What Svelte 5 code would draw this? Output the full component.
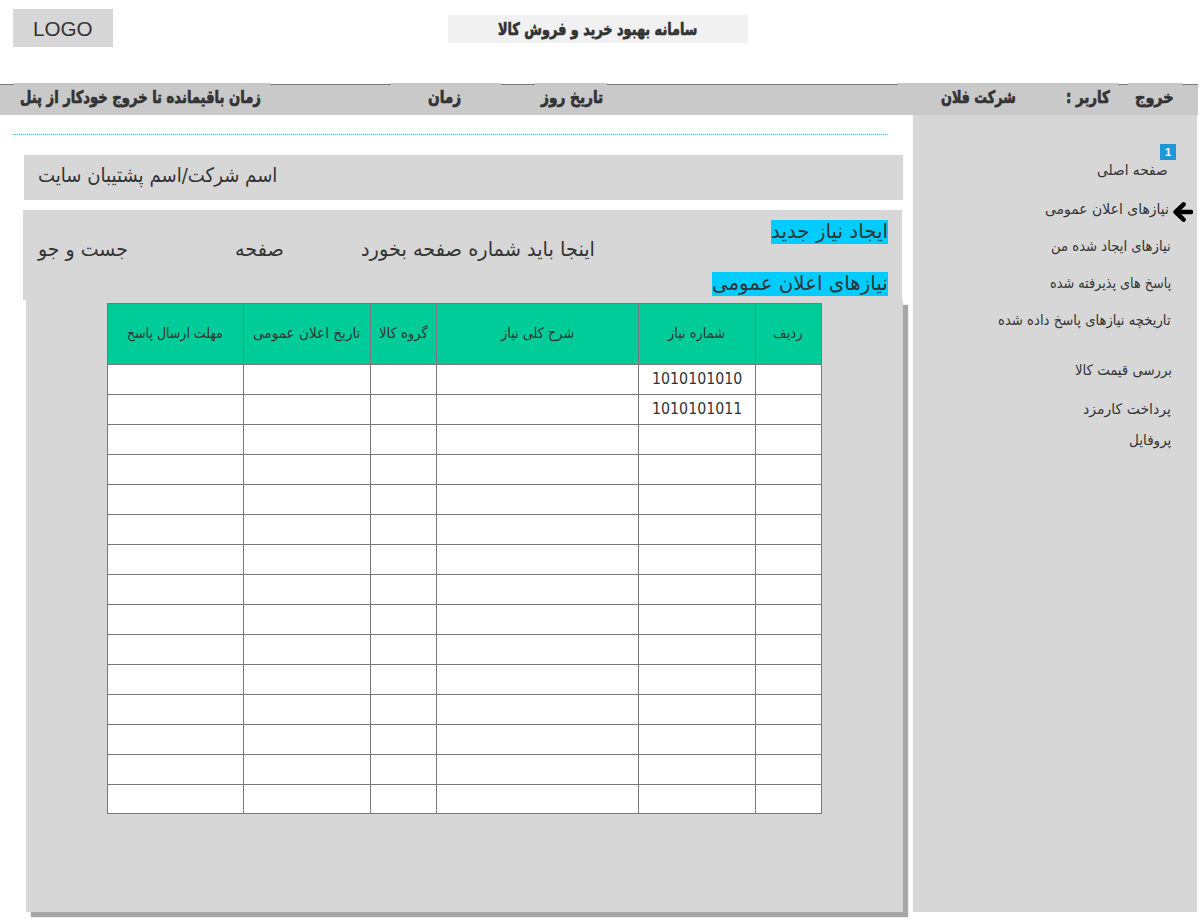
<script>
  const session = [
    { text: 'زمان باقیمانده تا خروج خودکار از پنل', w: 241, box: 256, before: 14, pad: 6 },
    { text: 'زمان', w: 33, box: 110, before: 121, pad: 37 },
    { text: 'تاریخ روز', w: 62, box: 72, before: 34, pad: 6 }
  ];
  const menu = [
    { text: 'صفحه اصلی', w: 71, h: 39, right: 29 },
    { text: 'نیازهای اعلان عمومی', w: 124, h: 37, right: 28, current: true },
    { text: 'نیازهای ایجاد شده من', w: 120, h: 37, right: 26 },
    { text: 'پاسخ های پذیرفته شده', w: 121, h: 37, right: 26 },
    { text: 'تاریخچه نیازهای پاسخ داده شده', w: 173, h: 50, right: 26 },
    { text: 'بررسی قیمت کالا', w: 97, h: 39, right: 25 },
    { text: 'پرداخت کارمزد', w: 88, h: 31, right: 26 },
    { text: 'پروفایل', w: 42, h: 30, right: 26 }
  ];
  const columns = [
    { text: 'مهلت ارسال پاسخ', w: 96 },
    { text: 'تاریخ اعلان عمومی', w: 107 },
    { text: 'گروه کالا', w: 49 },
    { text: 'شرح کلی نیاز', w: 73 },
    { text: 'شماره نیاز', w: 57 },
    { text: 'ردیف', w: 30 }
  ];
  const numbers = ['1010101010', '1010101011'];
  const rows = Array.from({ length: 15 }, (_, r) => columns.map((_, c) => (c === 4 ? numbers[r] : undefined)));

  // Condenses or widens a label so that it fills its allotted width.
  function fit(node, width) {
    node.style.transform = `scaleX(${width / node.offsetWidth})`;
  }
</script>

{#snippet label(text, w)}
  <span class="label" style="width:{w}px"><span class="ink" dir="rtl" use:fit={w}>{text}</span></span>
{/snippet}

<div class="page">
  <header>
    <div class="logo">{@render label('LOGO', 60)}</div>
    <h1>{@render label('سامانه بهبود خرید و فروش کالا', 199)}</h1>
  </header>

  <nav class="bar">
    {#each session as s}
      <div class="tag" style="width:{s.box}px;margin-left:{s.before}px;padding-left:{s.pad}px">{@render label(s.text, s.w)}</div>
    {/each}
    <div class="tag user">
      {@render label('شرکت فلان', 75)}
      {@render label('کاربر :', 44)}
    </div>
    <div class="tag exit">{@render label('خروج', 39)}</div>
  </nav>

  <div class="body">
    <main>
      <div class="rule"></div>
      <section class="company">{@render label('اسم شرکت/اسم پشتیبان سایت', 239)}</section>
      <section class="tools">
        <div class="search">{@render label('جست و جو', 90)}</div>
        <div class="pageword">{@render label('صفحه', 49)}</div>
        <div class="pagenum">{@render label('اینجا باید شماره صفحه بخورد', 234)}</div>
        <div class="links">
          <div class="mark">{@render label('ایجاد نیاز جدید', 117)}</div>
          <div class="mark">{@render label('نیازهای اعلان عمومی', 176)}</div>
        </div>
      </section>
      <section class="panel">
        <div class="table">
          {#each columns as c}
            <div class="cell head">{@render label(c.text, c.w)}</div>
          {/each}
          {#each rows as row}
            {#each row as value}
              <div class="cell">{#if value}{@render label(value, 90)}{/if}</div>
            {/each}
          {/each}
        </div>
      </section>
    </main>

    <aside>
      <div class="badge">1</div>
      {#each menu as m}
        <div class="item" style="height:{m.h}px;padding-right:{m.right}px">
          {@render label(m.text, m.w)}
          {#if m.current}
            <svg class="arrow" width="20" height="20" viewBox="0 0 20 20">
              <path d="M10.6 2.4 2.6 10l8 7.6M3 10h15" fill="none" stroke="#000" stroke-width="4.5" stroke-linecap="round" stroke-linejoin="round" />
            </svg>
          {/if}
        </div>
      {/each}
    </aside>
  </div>
</div>

<style>
  :global(body) { margin: 0; background: #fff; }
  .page { width: 1200px; height: 920px; overflow: hidden; color: #333; font-family: "DejaVu Sans", sans-serif; }
  .label { display: block; flex: none; white-space: nowrap; }
  .ink { display: inline-block; transform-origin: left center; line-height: 24px; vertical-align: top; }

  header { display: flex; height: 84px; align-items: flex-start; }
  .logo { box-sizing: border-box; width: 100px; height: 38px; margin: 9px 0 0 13px; padding: 1px 1px 0 0; background: #d7d7d7; display: flex; align-items: center; justify-content: center; font: 21px "Liberation Sans", Arial, sans-serif; }
  h1 { box-sizing: border-box; margin: 15px 0 0 335px; width: 300px; height: 28px; padding-right: 1px; background: #f1f1f1; display: flex; justify-content: center; align-items: center; font-size: 17px; font-weight: 700; -webkit-text-stroke: 0.7px #333; }

  .bar { display: flex; box-sizing: border-box; width: 1198px; height: 31px; border-top: 1px solid #797979; background: #c9c9c9; font-size: 17px; font-weight: 700; -webkit-text-stroke: 0.7px #333; }
  .tag { box-sizing: border-box; flex: none; margin-top: -2px; height: 32px; display: flex; align-items: center; padding-bottom: 4px; background: #c9c9c9; }
  .user { width: 220px; margin-left: 291px; padding-left: 43px; gap: 50px; }
  .exit { width: 54px; margin-left: 10px; padding-left: 7px; }

  .body { display: flex; }
  main { width: 913px; }
  .rule { width: 875px; height: 1px; margin: 19px 0 20px 13px; background: repeating-linear-gradient(90deg, #40c8d6 0 1px, #b8f6fa 1px 2px); }
  .company { box-sizing: border-box; width: 879px; height: 45px; margin-left: 24px; padding: 8px 14px; background: #d7d7d7; font-size: 20px; }
  .tools { box-sizing: border-box; position: relative; z-index: 1; display: flex; width: 879px; height: 90px; margin: 10px 0 0 23px; padding: 10px 14px 0 15px; background: #d7d7d7; font-size: 20px; }
  .search, .pageword, .pagenum { padding-top: 17px; }
  .pageword { margin-left: 107px; }
  .pagenum { margin-left: 77px; }
  .links { margin-left: auto; display: flex; flex-direction: column; align-items: flex-end; gap: 28px; }
  .mark { height: 24px; background: #00ccff; }
  .mark .ink { line-height: 22px; }
  .panel { box-sizing: border-box; width: 877px; height: 612px; margin-left: 26px; padding: 3px 0 0 81px; background: #d7d7d7; box-shadow: 5px 5px 1px rgba(0, 0, 0, 0.35); }
  .table { display: grid; box-sizing: border-box; width: 715px; grid-template-columns: 135px 126px 65px 201px 116px 65px; grid-template-rows: 60px repeat(14, 29px) 28px; gap: 1px; padding: 1px; background: #797979; font-size: 15px; }
  .cell { box-sizing: border-box; display: flex; align-items: center; justify-content: center; padding-bottom: 2px; background: #fff; min-width: 0; min-height: 0; }
  .head { padding: 0 1px 2px 0; background: #00cc99; font-size: 14.5px; }

  aside { box-sizing: border-box; width: 284px; height: 797px; padding-top: 29px; background: #d7d7d7; font-size: 14.5px; }
  .badge { width: 16px; height: 16px; margin-left: 247px; background: #1e98d7; color: #fff; font: 700 11px/16px "Liberation Sans", Arial, sans-serif; text-align: center; }
  .item { position: relative; display: flex; justify-content: flex-end; box-sizing: border-box; }
  .item .ink { line-height: 20px; }
  .arrow { position: absolute; right: 4px; top: 3px; }
</style>
